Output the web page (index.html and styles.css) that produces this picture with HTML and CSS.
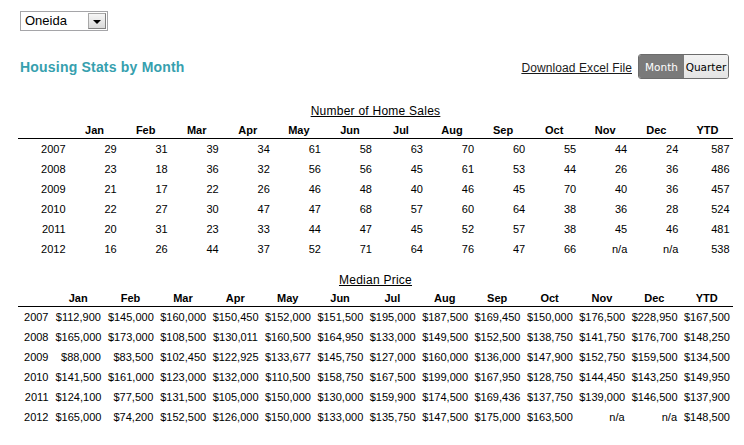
FILE: index.html
```html
<!DOCTYPE html>
<html>
<head>
<meta charset="utf-8">
<title>Housing Stats</title>
<link rel="stylesheet" href="styles.css">
</head>
<body>
<div class="page">
  <div class="select">
    <span class="select-value">Oneida</span>
    <span class="select-btn"><span class="arrow"></span></span>
  </div>

  <div class="toolbar">
    <h1 class="title">Housing Stats by Month</h1>
    <div class="actions">
      <a class="download" href="#">Download Excel File</a>
      <div class="toggle"><span class="seg active">Month</span><span class="seg">Quarter</span></div>
    </div>
  </div>

  <section class="stats sales">
    <div class="caption"><span>Number of Home Sales</span></div>
    <table>
      <thead>
        <tr><th></th><th>Jan</th><th>Feb</th><th>Mar</th><th>Apr</th><th>May</th><th>Jun</th><th>Jul</th><th>Aug</th><th>Sep</th><th>Oct</th><th>Nov</th><th>Dec</th><th>YTD</th></tr>
      </thead>
      <tbody>
        <tr><td>2007</td><td>29</td><td>31</td><td>39</td><td>34</td><td>61</td><td>58</td><td>63</td><td>70</td><td>60</td><td>55</td><td>44</td><td>24</td><td>587</td></tr>
        <tr><td>2008</td><td>23</td><td>18</td><td>36</td><td>32</td><td>56</td><td>56</td><td>45</td><td>61</td><td>53</td><td>44</td><td>26</td><td>36</td><td>486</td></tr>
        <tr><td>2009</td><td>21</td><td>17</td><td>22</td><td>26</td><td>46</td><td>48</td><td>40</td><td>46</td><td>45</td><td>70</td><td>40</td><td>36</td><td>457</td></tr>
        <tr><td>2010</td><td>22</td><td>27</td><td>30</td><td>47</td><td>47</td><td>68</td><td>57</td><td>60</td><td>64</td><td>38</td><td>36</td><td>28</td><td>524</td></tr>
        <tr><td>2011</td><td>20</td><td>31</td><td>23</td><td>33</td><td>44</td><td>47</td><td>45</td><td>52</td><td>57</td><td>38</td><td>45</td><td>46</td><td>481</td></tr>
        <tr><td>2012</td><td>16</td><td>26</td><td>44</td><td>37</td><td>52</td><td>71</td><td>64</td><td>76</td><td>47</td><td>66</td><td>n/a</td><td>n/a</td><td>538</td></tr>
      </tbody>
    </table>
  </section>

  <section class="stats price">
    <div class="caption"><span>Median Price</span></div>
    <table>
      <colgroup><col class="c-year"><col span="13"></colgroup>
      <thead>
        <tr><th></th><th>Jan</th><th>Feb</th><th>Mar</th><th>Apr</th><th>May</th><th>Jun</th><th>Jul</th><th>Aug</th><th>Sep</th><th>Oct</th><th>Nov</th><th>Dec</th><th>YTD</th></tr>
      </thead>
      <tbody>
        <tr><td>2007</td><td>$112,900</td><td>$145,000</td><td>$160,000</td><td>$150,450</td><td>$152,000</td><td>$151,500</td><td>$195,000</td><td>$187,500</td><td>$169,450</td><td>$150,000</td><td>$176,500</td><td>$228,950</td><td>$167,500</td></tr>
        <tr><td>2008</td><td>$165,000</td><td>$173,000</td><td>$108,500</td><td>$130,011</td><td>$160,500</td><td>$164,950</td><td>$133,000</td><td>$149,500</td><td>$152,500</td><td>$138,750</td><td>$141,750</td><td>$176,700</td><td>$148,250</td></tr>
        <tr><td>2009</td><td>$88,000</td><td>$83,500</td><td>$102,450</td><td>$122,925</td><td>$133,677</td><td>$145,750</td><td>$127,000</td><td>$160,000</td><td>$136,000</td><td>$147,900</td><td>$152,750</td><td>$159,500</td><td>$134,500</td></tr>
        <tr><td>2010</td><td>$141,500</td><td>$161,000</td><td>$123,000</td><td>$132,000</td><td>$110,500</td><td>$158,750</td><td>$167,500</td><td>$199,000</td><td>$167,950</td><td>$128,750</td><td>$144,450</td><td>$143,250</td><td>$149,950</td></tr>
        <tr><td>2011</td><td>$124,100</td><td>$77,500</td><td>$131,500</td><td>$105,000</td><td>$150,000</td><td>$130,000</td><td>$159,900</td><td>$174,500</td><td>$169,436</td><td>$137,750</td><td>$139,000</td><td>$146,500</td><td>$137,900</td></tr>
        <tr><td>2012</td><td>$165,000</td><td>$74,200</td><td>$152,500</td><td>$126,000</td><td>$150,000</td><td>$133,000</td><td>$135,750</td><td>$147,500</td><td>$175,000</td><td>$163,500</td><td>n/a</td><td>n/a</td><td>$148,500</td></tr>
      </tbody>
    </table>
  </section>

  <p class="note">Please Note: Data is updated daily and will not reflect the same numbers as reported to the local media.</p>
</div>
</body>
</html>
```

FILE: styles.css
```css
* { box-sizing: border-box; }

html, body {
  margin: 0;
  background: #fff;
}

body {
  font-family: "Liberation Sans", Arial, sans-serif;
  color: #000;
}

.page {
  width: 744px;
  height: 445px;
  overflow: hidden;
  padding: 11px 11px 0 18px;
}

/* fake select */
.select {
  margin-left: 2px;
  width: 88px;
  height: 20px;
  border: 1px solid #a5a5a8;
  display: flex;
  align-items: center;
  background: #fff;
}

.select-value {
  flex: 1;
  padding-left: 4px;
  font-size: 13px;
  line-height: 18px;
  color: #000;
}

.select-btn {
  width: 18px;
  height: 16px;
  margin-right: 1px;
  border: 1px solid #808080;
  border-top-color: #a8a8a8;
  border-left-color: #a8a8a8;
  background: linear-gradient(#f6f6f6, #d9d9d9);
  display: flex;
  align-items: center;
  justify-content: center;
}

.arrow {
  width: 0;
  height: 0;
  border-left: 4px solid transparent;
  border-right: 4px solid transparent;
  border-top: 4px solid #000;
  margin-top: 1px;
}

/* toolbar */
.toolbar {
  margin-top: 23px;
  width: 715px;
  height: 25px;
  display: flex;
  align-items: center;
  justify-content: space-between;
}

.title {
  margin: 0 0 0 2px;
  font-size: 14px;
  font-weight: bold;
  line-height: 16px;
  letter-spacing: 0.2px;
  color: #36a0ae;
}

.actions {
  display: flex;
  align-items: center;
  gap: 6px;
  margin-right: 4px;
}

.download {
  font-size: 12px;
  color: #1a1a1a;
  text-decoration: underline;
  letter-spacing: 0.1px;
  margin-top: 2px;
}

.toggle {
  display: flex;
  height: 25px;
  border: 1px solid #6c6c6c;
  border-radius: 3px;
  overflow: hidden;
}

.seg {
  width: 44px;
  display: flex;
  align-items: center;
  justify-content: center;
  font-family: "DejaVu Sans", Verdana, sans-serif;
  font-size: 10.5px;
  color: #000;
  background: linear-gradient(#f2f2f2, #e4e4e4);
}

.seg.active {
  width: 45px;
  color: #fff;
  background: #7a7a7a;
}

/* tables */
.stats {
  width: 715px;
}

.sales {
  margin-top: 25px;
}

.price {
  margin-top: 14px;
}

.caption {
  text-align: center;
  font-size: 12px;
  line-height: 14px;
  height: 14px;
  margin-bottom: 4px;
}

.caption span {
  text-decoration: underline;
  letter-spacing: 0.25px;
}

table {
  width: 715px;
  border-collapse: collapse;
  table-layout: fixed;
}

.c-year {
  width: 34px;
}

th {
  font-size: 11px;
  font-weight: bold;
  text-align: center;
  height: 16px;
  line-height: 14px;
  padding: 0 3px;
  vertical-align: middle;
  border-bottom: 1px solid #000;
}

td {
  font-size: 11px;
  text-align: right;
  height: 20px;
  line-height: 20px;
  padding: 0 3.5px;
  white-space: nowrap;
}

.note {
  margin: 17px 0 0 0;
  font-size: 12px;
  font-weight: bold;
  line-height: 14px;
  white-space: nowrap;
}
```
